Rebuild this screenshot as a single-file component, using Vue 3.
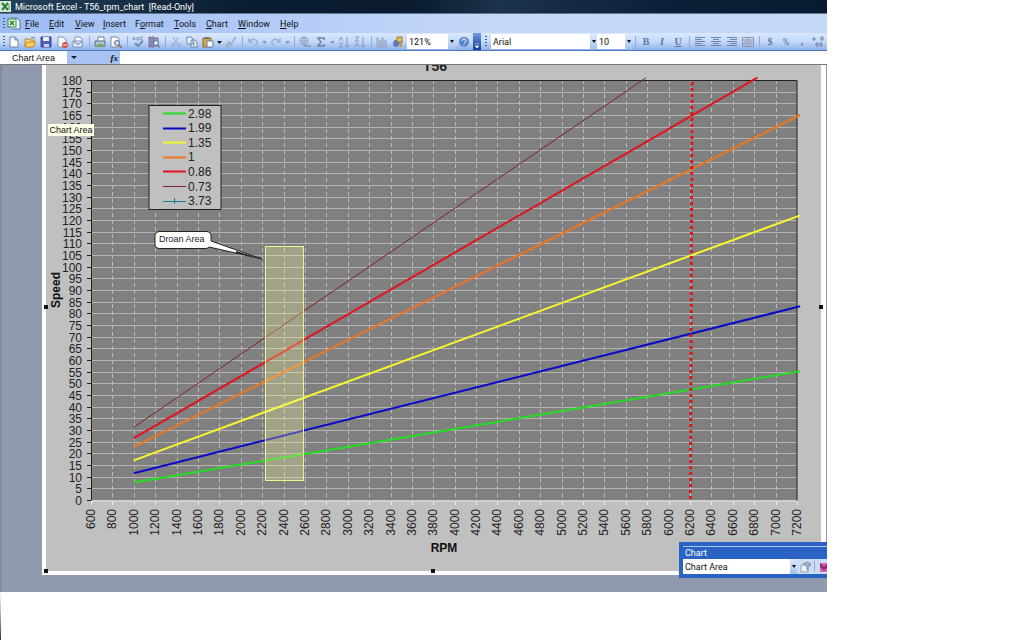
<script setup>
const menus = [
  ['F', 'ile', '', 24],
  ['E', 'dit', '', 26],
  ['V', 'iew', '', 28],
  ['I', 'nsert', '', 32],
  ['o', 'rmat', 'F', 39],
  ['T', 'ools', '', 32],
  ['C', 'hart', '', 32],
  ['W', 'indow', '', 42],
  ['H', 'elp', '', 28],
]
const standard = ['new', 'open', 'save', 'perm', 'mail', 'sep', 'print', 'preview', 'sep', 'spell', 'research', 'sep', 'cut', 'copy', 'paste', 'drop', 'brush', 'sep', 'undo', 'fade', 'redo', 'fade', 'sep', 'link', 'sum', 'fade', 'asc', 'desc', 'sep', 'chart', 'draw']
const ticksY = Array.from({ length: 37 }, (_, i) => i * 5)
const ticksX = Array.from({ length: 34 }, (_, i) => 600 + i * 200)
const px = (v) => 91 + ((v - 600) * 706) / 6600
const py = (v) => 500 - (v * 420) / 180
const series = [
  { name: '2.98', color: '#22dd22', w: 2, from: [1000, 7.5], to: [7230, 55.2] },
  { name: '1.99', color: '#0a0ac4', w: 2, from: [1000, 11.5], to: [7230, 83] },
  { name: '1.35', color: '#f6f62c', w: 2, from: [1000, 17], to: [7230, 122] },
  { name: '1', color: '#ee7420', w: 2, from: [1000, 22.8], to: [7230, 165] },
  { name: '0.86', color: '#e0141c', w: 2, from: [1000, 26.5], to: [6830, 181] },
  { name: '0.73', color: '#7d2428', w: 1, from: [1000, 31.2], to: [5790, 181] },
]
const legend = [...series, { name: '3.73', color: '#157f86', w: 1 }]
const handles = [[46, 307], [821, 307], [46, 571], [433, 571]]
</script>

<template>
  <div class="page">
    <main class="window">
      <header class="title">
        <svg class="logo" viewBox="0 0 11 11"><rect width="11" height="11" fill="#d9ecd3" /><path d="M2 2l6 7M8 2L2 9" stroke="#218237" stroke-width="2" /><path d="M8 4h2M8 6h2M8 8h2" stroke="#5a9d60" /></svg>
        <span>Microsoft Excel - T56_rpm_chart&nbsp; [Read-Only]</span>
      </header>
      <nav class="menu">
        <i class="grip"></i>
        <svg class="book" viewBox="0 0 14 13"><path d="M4 1h6l3 3v8H5" fill="#f4f8ff" stroke="#53709e" /><rect x="1" y="2" width="8" height="8" fill="#e2f2dc" stroke="#3d8b48" /><path d="M3 4l4 4M7 4L3 8" stroke="#23823a" stroke-width="1.5" /></svg>
        <button v-for="m in menus" :key="m[1]" :style="{ width: m[3] + 'px' }">{{ m[2] }}<u>{{ m[0] }}</u>{{ m[1] }}</button>
      </nav>
      <div class="toolbar">
        <i class="grip first"></i>
        <template v-for="(k, i) in standard" :key="i">
          <i v-if="k === 'sep'" class="sep"></i>
          <button v-else :class="['tool', { narrow: k === 'drop' || k === 'fade' }]" :aria-label="k">
            <svg v-if="k === 'drop' || k === 'fade'" viewBox="0 0 5 12"><path d="M0 5h5L2.500 8z" :fill="k === 'drop' ? '#111' : '#8598bd'" /></svg>
            <svg v-else viewBox="0 0 12 12">
              <path v-if="k === 'new'" d="M2 1h5l3 3v7H2zM7 1v3h3" fill="#fff" stroke="#6c83ae" />
              <g v-else-if="k === 'open'"><path d="M1 10V3h4l1 1h4v2" fill="#f8d878" stroke="#ba852a" /><path d="M1 11l2-5h9l-3 5z" fill="#ffd15c" stroke="#c28829" /><path d="M7 2q3-2 4 1" fill="none" stroke="#4872af" /></g>
              <g v-else-if="k === 'save'"><path d="M1 1h10v10H1z" fill="#4c5fc0" stroke="#3b489e" /><path d="M3 1h6v4H3z" fill="#e9eefc" /><path d="M4 8h5v3H4z" fill="#cad1e4" /></g>
              <g v-else-if="k === 'perm'"><path d="M2 1h5l3 3v7H2z" fill="#fff" stroke="#8290b0" /><circle cx="9" cy="9" r="3" fill="#d84a3a" /><path d="M7 9h4" stroke="#fff" /></g>
              <g v-else-if="k === 'mail'"><path d="M3 5V1h5l2 2v3" fill="#fff" stroke="#8595b2" /><path d="M1 5h9v6H1zM1 5l5 4 4-4" fill="#e8edf8" stroke="#7f90b0" /></g>
              <g v-else-if="k === 'print'"><path d="M4 5V1h6v4" fill="#fff" stroke="#7183a5" /><path d="M1 5h10v5H1z" fill="#b8c4d4" stroke="#596c8a" /><path d="M3 8h6v3H3z" fill="#6fae58" /></g>
              <g v-else-if="k === 'preview'"><path d="M1 1h6l2 2v8H1z" fill="#fff" stroke="#7688ab" /><circle cx="7" cy="7" r="2.500" fill="#cde3f3" stroke="#57677e" /><path d="M9 9l3 3" stroke="#8a6744" stroke-width="1.500" /></g>
              <g v-else-if="k === 'spell'" fill="none" stroke="#8295ba"><path d="M1 4l1-3 1 3M5 1v3h2V1M11 1H9v3h2" /><path d="M3 7l3 3 5-5" stroke="#7088b9" stroke-width="2" /></g>
              <g v-else-if="k === 'research'"><path d="M1 1h2v10H1zM4 1h2v10H4zM7 2h3v8H7z" fill="#c9a0b8" stroke="#65679b" /><circle cx="8" cy="7" r="2.500" fill="#deebfa" stroke="#56729f" /><path d="M10 9l2 3" stroke="#806338" /></g>
              <g v-else-if="k === 'cut'" fill="none" stroke="#9aaac8"><path d="M3 1l5 8M8 1L4 9" /><circle cx="3" cy="9" r="1.500" /><circle cx="9" cy="9" r="1.500" /></g>
              <g v-else-if="k === 'copy'" fill="#eef4ff" stroke="#6e84ae"><path d="M1 1h4l2 2v5H1zM5 4h4l2 2v5H5z" /><path d="M7 7h2M7 9h2" /></g>
              <g v-else-if="k === 'paste'"><path d="M1 2h8v9H1z" fill="#d6a545" stroke="#8d6a2b" /><path d="M3 1h4v2H3z" fill="#717b8c" /><path d="M5 5h6v6H5z" fill="#fff" stroke="#6680b0" /></g>
              <path v-else-if="k === 'brush'" d="M11 1L7 6M4 6l3 2-4 3-2-1z" fill="#b5c2d8" stroke="#9aaac8" stroke-width="1.500" />
              <path v-else-if="k === 'undo'" d="M2 2v4h4M2 6q4-5 8-1 1 3-3 5" fill="none" stroke="#9cb0d6" stroke-width="1.500" />
              <path v-else-if="k === 'redo'" d="M10 2v4H6M10 6Q6 1 2 5q-1 3 3 5" fill="none" stroke="#9cb0d6" stroke-width="1.500" />
              <g v-else-if="k === 'link'" fill="none" stroke="#8fa0c0"><circle cx="5" cy="5" r="4" /><path d="M1 5h8M5 1q-3 4 0 8M5 1q3 4 0 8" /><path d="M5 10h3M8 10h4" stroke-width="2" /></g>
              <path v-else-if="k === 'sum'" d="M9 4V2H3l3 4-3 4h6V8" fill="none" stroke="#6f82a9" stroke-width="1.500" />
              <g v-else-if="k === 'asc'" fill="none" stroke="#8598bf"><path d="M1 5l2-4 2 4M1 7h4l-4 4h4M9 1v10M7 9l2 2 2-2" /></g>
              <g v-else-if="k === 'desc'" fill="none" stroke="#8598bf"><path d="M1 1h4L1 5h4M1 11l2-4 2 4M9 1v10M7 9l2 2 2-2" /></g>
              <g v-else-if="k === 'chart'" fill="#b9c7e0" stroke="#8fa1c4"><path d="M1 1v10h11M3 5h1v5H3zM6 2h1v8H6zM9 4h1v6H9z" /></g>
              <g v-else><path d="M1 5l5-2 5 3-5 3z" fill="#5d84c7" /><path d="M5 1h5v5H5z" fill="#eac252" stroke="#9d7b34" /><circle cx="4" cy="8" r="3" fill="#6575b4" /><path d="M7 7l4 1-3 4z" fill="#c9972e" /></g>
            </svg>
          </button>
        </template>
        <label class="combo zoom"><input aria-label="Zoom" value="121%"><b></b></label>
        <button class="tool help" aria-label="Help"><svg viewBox="0 0 12 12"><circle cx="6" cy="6" r="5" fill="#4f83cc" stroke="#8cadda" /><path d="M4 5q0-2 2-2t2 2q0 1-2 2M6 8v1" fill="none" stroke="#fff" /></svg></button>
        <button class="more" aria-label="Toolbar options"><svg viewBox="0 0 8 17"><path d="M2 11h4M2 13h4l-2 2z" fill="#fff" stroke="#fff" stroke-width=".5" /></svg></button>
        <i class="grip second"></i>
        <label class="combo font"><input aria-label="Font" value="Arial"><b></b></label>
        <label class="combo size"><input aria-label="Font size" value="10"><b></b></label>
        <i class="sep"></i>
        <button class="fmt bold">B</button><button class="fmt ital">I</button><button class="fmt under">U</button>
        <i class="sep"></i>
        <button v-for="a in 4" :key="a" class="fmt" aria-label="Align">
          <svg viewBox="0 0 12 12" fill="none" stroke="#7083aa">
            <path v-if="a === 1" d="M1 1.500h10M1 3.500h7M1 5.500h10M1 7.500h7M1 9.500h10" />
            <path v-else-if="a === 2" d="M1 1.500h10M3 3.500h6M1 5.500h10M3 7.500h6M1 9.500h10" />
            <path v-else-if="a === 3" d="M1 1.500h10M4 3.500h7M1 5.500h10M4 7.500h7M1 9.500h10" />
            <path v-else d="M.5 1.500h11v9H.5zM.5 4h11M.5 8h11M6 1v3M6 8v3M2 6h2M8 6h2M5 5v2M7 5v2" stroke="#8c93ac" />
          </svg>
        </button>
        <i class="sep"></i>
        <button class="fmt bold">$</button><button class="fmt">%</button><button class="fmt bold">,</button>
        <button class="fmt" aria-label="Increase decimal"><svg viewBox="0 0 12 12" fill="none" stroke="#7083aa"><path d="M0 3h4M2 1v4M9 1h2v3H9zM4 7h2v3H4zM8 7h2v3H8z" /></svg></button>
      </div>
      <div class="formula">
        <input class="name" aria-label="Name box" value="Chart Area">
        <div class="fx"><b></b><em>fx</em></div>
        <input class="entry" aria-label="Formula">
      </div>
      <section class="work">
        <div class="sheet">
          <svg class="plot" viewBox="46 65 775 506" role="img" aria-label="Speed by RPM">
            <defs><clipPath id="area"><rect x="46" y="65" width="775" height="506" /></clipPath></defs>
            <text x="435" y="71" class="big" clip-path="url(#area)">T56</text>
            <rect x="91" y="80" width="706" height="420" fill="#808080" />
            <path v-for="v in ticksY" :key="v" :d="`M91 ${Math.round(py(v)) + .5}H797`" stroke="#b4b4b4" />
            <path v-for="v in ticksX" :key="v" :d="`M${Math.round(px(v)) + .5} 80V500`" stroke="#bcbcbc" stroke-dasharray="4 3" />
            <path d="M91.500 501V80.500H797V501" fill="none" stroke="#222" />
            <path d="M91 501H797" stroke="#e4e4e4" />
            <g v-for="v in ticksY" :key="'y' + v">
              <path :d="`M87 ${Math.round(py(v)) + .5}h4`" stroke="#222" />
              <text x="82" :y="Math.round(py(v)) + 5" class="num">{{ v }}</text>
            </g>
            <g v-for="v in ticksX" :key="'x' + v">
              <path :d="`M${Math.round(px(v)) + .5} 501v4`" stroke="#eee" />
              <text :transform="`translate(${Math.round(px(v)) + 4} 509) rotate(-90)`" class="num">{{ v }}</text>
            </g>
            <path v-for="s in series" :key="s.name" :d="`M${px(s.from[0])} ${py(s.from[1])}L${px(s.to[0])} ${py(s.to[1])}`" :stroke="s.color" :stroke-width="s.w" />
            <path d="M692 82L690.500 499" stroke="#e0141c" stroke-width="3" stroke-dasharray="3 3" />
            <rect x="265.500" y="246.500" width="38" height="234" fill="#ffff99" fill-opacity=".27" stroke="#f0f08c" />
            <rect x="149" y="105.500" width="72" height="104" fill="#c0c0c0" stroke="#222" />
            <g v-for="(s, i) in legend" :key="'l' + s.name">
              <path :d="`M163 ${Math.round(113 + i * 14.600)}.500h23`" :stroke="s.color" :stroke-width="s.w" />
              <path v-if="i === 6" d="M174.500 198v6" :stroke="s.color" />
              <text x="188" :y="Math.round(117.500 + i * 14.600)" class="key">{{ s.name }}</text>
            </g>
            <path d="M159 231.500h48q4 0 4 4v5.500L262 259 209 247q-1 1.500-4 1.500H159q-4 0-4-4v-9q0-4 4-4z" fill="#fff" stroke="#222" />
            <path d="M236 251l26 8-26-6z" fill="#222" />
            <text x="159" y="242" class="call">Droan Area</text>
            <text transform="translate(60 290) rotate(-90)" class="axis">Speed</text>
            <text x="444" y="552" class="axis">RPM</text>
            <rect v-for="h in handles" :key="h.join()" :x="h[0] - 2" :y="h[1] - 2" width="4" height="4" fill="#111" />
          </svg>
          <span class="tip">Chart Area</span>
        </div>
        <aside class="float">
          <div class="ftitle">Chart</div>
          <div class="fbody">
            <label class="combo"><input aria-label="Chart objects" value="Chart Area"><b></b></label>
            <button aria-label="Format"><svg viewBox="0 0 12 12"><path d="M1 4h7v7H1z" fill="#eef1f8" stroke="#98a4bd" /><path d="M3 3l4-2 4 2-1 2-2-1v5H7V5z" fill="#a9b2c7" stroke="#8793ae" /></svg></button>
            <i class="sep"></i>
            <button class="type" aria-label="Chart type"><svg viewBox="0 0 8 12"><path d="M1 2h7v9H1z" fill="#d75fa6" /><path d="M1 2l4 4 3-3v4l-3 2-4-3z" fill="#8d2677" /></svg></button>
          </div>
        </aside>
      </section>
      <div class="edge"></div>
    </main>
  </div>
</template>

<style>
body { background: #fff; }
</style>

<style scoped>
* { box-sizing: border-box; }
.page { display: grid; grid-template-columns: minmax(0, 827fr) minmax(0, 197fr); min-height: 100vh; align-items: start; font: 9px/12px Roboto, "Noto Sans", sans-serif; color: #111; }
.window { min-width: 0; overflow: hidden; }
button { border: 0; padding: 0; margin: 0; background: none; font: inherit; color: inherit; flex: none; }
input { border: 0; padding: 0; margin: 0; min-width: 0; background: #fff; font: inherit; color: #111; outline: 0; }
svg { display: block; }
.title { display: flex; align-items: center; gap: 4px; height: 14px; background: linear-gradient(90deg, #24425a, #0a1c31 30%, #0a1b30 50%, #1b334b 60%, #0c2039 80%, #081a30); color: #fff; border-bottom: 1px solid #63758c; white-space: nowrap; }
.logo { width: 11px; height: 11px; }
.menu { display: flex; align-items: center; height: 19px; background: linear-gradient(90deg, #9ebcf4, #c4d8f8 60%); padding-left: 3px; }
.menu button { text-align: left; white-space: nowrap; }
.grip { width: 2px; height: 12px; flex: none; background: repeating-linear-gradient(#405fa0 0 1px, transparent 1px 3px); }
.first { margin-right: 1px; }
.book { width: 14px; height: 13px; margin: 0 4px 0 2px; }
.toolbar { display: flex; align-items: center; height: 18px; padding-left: 3px; background: linear-gradient(#dbe8fc, #c4d9f8 50%, #8fb2e9); border-bottom: 1px solid #4a77bd; }
.tool { width: 12px; height: 12px; margin: 0 2px; }
.tool svg, .fmt svg { width: 12px; height: 12px; }
.narrow { margin: 0 1px; }
.narrow, .narrow svg { width: 5px; }
.sep { width: 1px; height: 11px; background: #8fabd9; flex: none; margin: 0 2px 0 3px; }
.combo { display: flex; height: 15px; background: #fff; flex: none; }
.combo input { flex: 1; padding-left: 2px; }
.combo b { width: 7px; background: linear-gradient(#dce9fd, #a6c3ef); display: grid; place-items: center; }
.combo b::after { content: ""; border: 2px solid transparent; border-top: 3px solid #111; border-bottom: 0; }
.zoom { width: 48px; margin-left: 1px; }
.help { margin: 0 3px; }
.more { width: 8px; height: 17px; background: linear-gradient(#6f9ae0, #143c96); }
.second { margin: 0 4px 0 4px; }
.font { width: 106px; }
.size { width: 35px; }
.fmt { width: 12px; height: 12px; margin: 0 2px; color: #6075a2; display: grid; place-items: center; }
.bold { font: bold 10px/12px "Liberation Serif", serif; }
.ital { font: italic bold 10px/12px "Liberation Serif", serif; }
.under { font: bold 10px/12px "Liberation Serif", serif; text-decoration: underline; }
.formula { display: flex; height: 13px; background: #fff; }
.name { width: 67px; padding-left: 12px; font: 9px/12px "Liberation Sans", Arial, sans-serif; }
.fx { width: 53px; display: flex; align-items: center; justify-content: space-between; background: #a7c2f3; padding: 0 2px 0 4px; }
.fx b { border: 3px solid transparent; border-top-color: #101c40; border-bottom: 0; }
.fx em { font: italic bold 9px/12px "Liberation Serif", serif; }
.entry { flex: 1; }
.work { position: relative; background: #9099ae; border-top: 1px solid #777; border-left: 2px solid #858b98; padding: 0 1px 17px 40px; }
.sheet { position: relative; background: #fff; padding: 0 5px 4px 4px; }
.plot { width: 100%; height: auto; background: #c0c0c0; overflow: visible; }
text { font: 12px "Liberation Sans", Arial, sans-serif; fill: #222; }
.num { text-anchor: end; }
.key { font-size: 12px; }
.call { font-size: 9px; }
.axis { text-anchor: middle; font-weight: bold; font-size: 12px; fill: #111; }
.big { text-anchor: middle; font-weight: bold; font-size: 14px; }
.tip { position: absolute; left: 6px; top: 59px; width: 46px; background: #ffffe6; font: 9px/12px "Liberation Sans", Arial, sans-serif; text-align: center; white-space: nowrap; }
.float { position: absolute; right: 0; bottom: 14px; width: 148px; background: #2b63c4; padding: 4px 0 4px 4px; }
.ftitle { color: #fff; height: 13px; padding-left: 2px; border-top: 1px solid #a9c5f2; }
.fbody { display: flex; align-items: center; height: 15px; background: #cbdcf7; overflow: hidden; }
.fbody .combo { width: 114px; }
.fbody button { margin-left: 3px; }
.fbody button svg { width: 12px; height: 12px; }
.fbody .type { margin-left: 2px; }
.fbody .type svg { width: 8px; }
.fbody .sep { margin-left: 2px; }
.edge { width: 1px; height: 48px; background: linear-gradient(#fff, #aaa 50%, #333); }
</style>
